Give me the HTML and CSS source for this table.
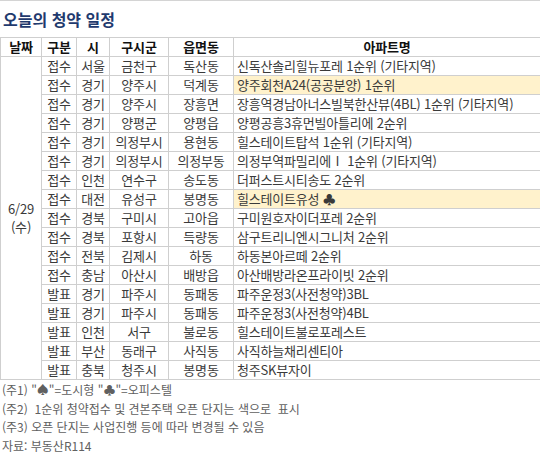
FILE: index.html
```html
<!DOCTYPE html>
<html lang="ko">
<head>
<meta charset="utf-8">
<title>오늘의 청약 일정</title>
<link rel="stylesheet" href="styles.css">
</head>
<body>
<div class="page">
  <h1 class="title">오늘의 청약 일정</h1>
  <table class="schedule">
    <colgroup>
      <col class="c-date"><col class="c-type"><col class="c-si"><col class="c-gu"><col class="c-dong"><col class="c-apt">
    </colgroup>
    <thead>
      <tr><th>날짜</th><th>구분</th><th>시</th><th>구시군</th><th>읍면동</th><th>아파트명</th></tr>
    </thead>
    <tbody>
      <tr><td class="date" rowspan="17">6/29<br>(수)</td><td>접수</td><td>서울</td><td>금천구</td><td>독산동</td><td class="apt">신독산솔리힐뉴포레 1순위 (기타지역)</td></tr>
      <tr><td>접수</td><td>경기</td><td>양주시</td><td>덕계동</td><td class="apt hl">양주회천A24(공공분양) 1순위</td></tr>
      <tr><td>접수</td><td>경기</td><td>양주시</td><td>장흥면</td><td class="apt">장흥역경남아너스빌북한산뷰(4BL) 1순위 (기타지역)</td></tr>
      <tr><td>접수</td><td>경기</td><td>양평군</td><td>양평읍</td><td class="apt">양평공흥3휴먼빌아틀리에 2순위</td></tr>
      <tr><td>접수</td><td>경기</td><td>의정부시</td><td>용현동</td><td class="apt">힐스테이트탑석 1순위 (기타지역)</td></tr>
      <tr><td>접수</td><td>경기</td><td>의정부시</td><td>의정부동</td><td class="apt">의정부역파밀리에Ⅰ 1순위 (기타지역)</td></tr>
      <tr><td>접수</td><td>인천</td><td>연수구</td><td>송도동</td><td class="apt">더퍼스트시티송도 2순위</td></tr>
      <tr><td>접수</td><td>대전</td><td>유성구</td><td>봉명동</td><td class="apt hl">힐스테이트유성 ♣</td></tr>
      <tr><td>접수</td><td>경북</td><td>구미시</td><td>고아읍</td><td class="apt">구미원호자이더포레 2순위</td></tr>
      <tr><td>접수</td><td>경북</td><td>포항시</td><td>득량동</td><td class="apt">삼구트리니엔시그니처 2순위</td></tr>
      <tr><td>접수</td><td>전북</td><td>김제시</td><td>하동</td><td class="apt">하동본아르떼 2순위</td></tr>
      <tr><td>접수</td><td>충남</td><td>아산시</td><td>배방읍</td><td class="apt">아산배방라온프라이빗 2순위</td></tr>
      <tr><td>발표</td><td>경기</td><td>파주시</td><td>동패동</td><td class="apt">파주운정3(사전청약)3BL</td></tr>
      <tr><td>발표</td><td>경기</td><td>파주시</td><td>동패동</td><td class="apt">파주운정3(사전청약)4BL</td></tr>
      <tr><td>발표</td><td>인천</td><td>서구</td><td>불로동</td><td class="apt">힐스테이트불로포레스트</td></tr>
      <tr><td>발표</td><td>부산</td><td>동래구</td><td>사직동</td><td class="apt">사직하늘채리센티아</td></tr>
      <tr><td>발표</td><td>충북</td><td>청주시</td><td>봉명동</td><td class="apt">청주SK뷰자이</td></tr>
    </tbody>
  </table>
  <div class="notes">
    <p>(주1) "♠"=도시형 "♣"=오피스텔</p>
    <p>(주2)&nbsp; 1순위 청약접수 및 견본주택 오픈 단지는 색으로&nbsp; 표시</p>
    <p>(주3) 오픈 단지는 사업진행 등에 따라 변경될 수 있음</p>
    <p>자료: 부동산R114</p>
  </div>
</div>
</body>
</html>
```

FILE: styles.css
```css
html, body {
  margin: 0;
  padding: 0;
  background: #ffffff;
}

.page {
  width: 540px;
  font-family: "Noto Sans CJK KR", "Noto Sans", sans-serif;
  border-top: 1px solid #d4d4d4;
}

.title {
  margin: 0;
  height: 36px;
  line-height: 36px;
  padding-left: 3px;
  font-size: 16px;
  font-weight: bold;
  color: #1f3a6e;
  letter-spacing: 0;
}

.schedule {
  width: 540px;
  table-layout: fixed;
  border-collapse: collapse;
  font-size: 13px;
  letter-spacing: -0.2px;
  color: #3a3a3a;
}

.c-date { width: 41px; }
.c-type { width: 35px; }
.c-si { width: 33px; }
.c-gu { width: 59px; }
.c-dong { width: 65px; }
.c-apt { width: 307px; }

.schedule th,
.schedule td {
  border: 1px solid #cfcfcf;
  height: 18px;
  padding: 0;
  line-height: 18px;
  text-align: center;
  white-space: nowrap;
  overflow: hidden;
}

.schedule th {
  font-weight: bold;
  color: #111111;
}

.schedule td.date {
  line-height: 18px;
  vertical-align: middle;
}

.schedule td.apt {
  text-align: left;
  padding-left: 3px;
}

.schedule td.hl {
  background: #fff2cc;
}

.notes {
  padding-top: 1px;
  padding-left: 2px;
  font-size: 12px;
  letter-spacing: 0;
  color: #606060;
}

.notes p {
  margin: 0;
  line-height: 18.7px;
}
```
